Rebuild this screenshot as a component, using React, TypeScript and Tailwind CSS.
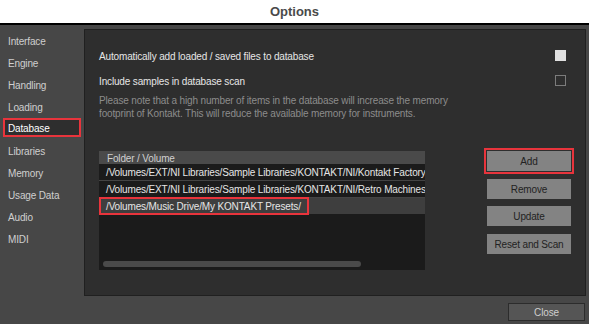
import React from 'react';

const font = { fontFamily: '"Liberation Sans", Arial, sans-serif' };

const NAV = ['Interface', 'Engine', 'Handling', 'Loading', 'Database', 'Libraries', 'Memory', 'Usage Data', 'Audio', 'MIDI'];

const ROWS = [
  '/Volumes/EXT/NI Libraries/Sample Libraries/KONTAKT/NI/Kontakt Factory Library',
  '/Volumes/EXT/NI Libraries/Sample Libraries/KONTAKT/NI/Retro Machines MK2',
];

function Btn({ label, outlined }: { label: string; outlined?: boolean }) {
  return (
    <div className={outlined ? 'border-2 border-[#e8343c] p-px' : 'px-[3px]'}>
      <div className="flex h-[20px] w-[84px] items-center justify-center bg-[#838383] text-[10px] tracking-[-0.15px] text-[#222]">
        {label}
      </div>
    </div>
  );
}

export default function App() {
  return (
    <div className="flex h-[324px] w-[589px] flex-col overflow-hidden bg-[#474747] select-none tracking-[-0.15px]" style={font}>
      {/* title bar */}
      <div className="flex h-[25px] items-center justify-center border-b-2 border-black bg-white">
        <span className="text-[13px] font-bold tracking-normal text-[#4a4a4a]">Options</span>
      </div>

      <div className="flex min-w-0 flex-1">
        {/* sidebar */}
        <div className="flex w-[84px] shrink-0 flex-col pt-[5px]">
          {NAV.map((item) => (
            <div key={item} className="flex h-[22px] items-center px-[3px]">
              {item === 'Database' ? (
                <div className="-mt-[3px] flex h-[19px] w-[78px] items-center border-2 border-[#e8343c] bg-[#2e2e2e] pl-[3px] pt-[2px] text-[10px] text-white">
                  {item}
                </div>
              ) : (
                <span className="pl-[5px] text-[10px] text-[#cfcfcf]">{item}</span>
              )}
            </div>
          ))}
        </div>

        {/* panel */}
        <div className="mt-[4px] mr-[3px] flex h-[267px] min-w-0 flex-1 flex-col border border-[#202020] bg-[#2e2e2e] pl-[14px] pr-[10px] pt-[19px]">
          <div className="mr-[9px] flex h-[12px] items-center justify-between">
            <span className="pt-[2px] text-[10px] text-[#e6e6e6]">Automatically add loaded / saved files to database</span>
            <div className="h-[11px] w-[11px] bg-[#e0e0e0]" />
          </div>
          <div className="mr-[9px] mt-[13px] flex h-[12px] items-center justify-between">
            <span className="pt-[2px] text-[10px] text-[#e6e6e6]">Include samples in database scan</span>
            <div className="h-[11px] w-[11px] border border-[#7c7c7c]" />
          </div>
          <p className="mt-[8px] text-[10px] leading-[13px] text-[#8c8c8c]">
            Please note that a high number of items in the database will increase the memory
            <br />
            footprint of Kontakt. This will reduce the available memory for instruments.
          </p>

          <div className="mt-[31px] flex">
            {/* table */}
            <div className="flex h-[119px] w-[326px] shrink-0 flex-col bg-[#1b1b1b]">
              <div className="flex h-[13px] items-center bg-[#4a4a4a] pl-[8px] pt-px text-[10px] text-[#d0d0d0]">
                Folder / Volume
              </div>
              {ROWS.map((r) => (
                <div
                  key={r}
                  className="flex h-[17px] items-center overflow-hidden whitespace-nowrap border-b border-[#444] pl-[7px] pt-px text-[10px] text-[#e6e6e6]"
                >
                  {r}
                </div>
              ))}
              <div className="flex h-[16px] items-center bg-[#3e3e3e]">
                <div className="flex h-[18px] items-center border-2 border-[#e8343c] pl-[5px] pr-[6px] pt-px text-[10px] text-[#e6e6e6]">
                  /Volumes/Music Drive/My KONTAKT Presets/
                </div>
              </div>
              <div className="flex-1" />
              <div className="mb-[3px] ml-[4px] h-[6px] w-[258px] rounded-full bg-[#4a4a4a]" />
            </div>

            {/* buttons */}
            <div className="-mt-[3px] ml-[59px] flex flex-col gap-[5px]">
              <Btn label="Add" outlined />
              <Btn label="Remove" />
              <div className="mt-[2px]">
                <Btn label="Update" />
              </div>
              <div className="mt-[3px]">
                <Btn label="Reset and Scan" />
              </div>
            </div>
          </div>
        </div>
      </div>

      {/* bottom bar */}
      <div className="flex h-[27px] items-center justify-end pr-[4px] pt-[2px]">
        <div className="flex h-[18px] w-[77px] items-center justify-center border border-[#2c2c2c] bg-[#555] pt-px text-[10px] text-[#cfcfcf]">
          Close
        </div>
      </div>
    </div>
  );
}
